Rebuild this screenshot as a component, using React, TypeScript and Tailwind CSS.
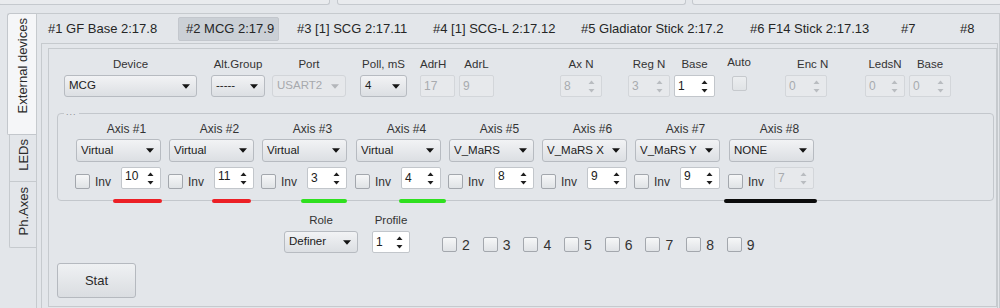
import React from "react";

const FONT = "font-['Liberation_Sans',Arial,sans-serif]";

function DropArrow({ disabled }: { disabled?: boolean }) {
  return (
    <svg width="8" height="5" viewBox="0 0 8 5" className="shrink-0">
      <path d="M0 0.3H8L4 4.8Z" fill={disabled ? "#b3b6ba" : "#141414"} />
    </svg>
  );
}

function SpinArrows({ disabled }: { disabled?: boolean }) {
  const c = disabled ? "#b9bcc0" : "#1e1e1e";
  return (
    <svg width="7" height="13" viewBox="0 0 7 13" className="shrink-0">
      <path d="M3.5 0.5L6.5 4H0.5Z" fill={c} />
      <path d="M0.5 9H6.5L3.5 12.5Z" fill={c} />
    </svg>
  );
}

function Combo({
  text,
  className = "",
  disabled,
}: {
  text: string;
  className?: string;
  disabled?: boolean;
}) {
  return (
    <div
      className={`flex shrink-0 items-center justify-between rounded-[3px] border pl-[4px] pr-[6px] text-[11.5px] ${
        disabled
          ? "border-[#d2d5d9] bg-[#e6e8eb] text-[#a6a9ad]"
          : "border-[#b7bbc1] bg-linear-to-b from-[#f2f3f5] to-[#dcdfe3] text-[#202020]"
      } ${className}`}
    >
      <span className="whitespace-nowrap leading-none">{text}</span>
      <DropArrow disabled={disabled} />
    </div>
  );
}

function Spin({
  value,
  className = "",
  disabled,
  high,
  noArrows,
}: {
  value: string;
  className?: string;
  disabled?: boolean;
  high?: boolean;
  noArrows?: boolean;
}) {
  return (
    <div
      className={`flex shrink-0 justify-between rounded-[2px] border pl-[3px] pr-[6px] text-[12px] ${
        high ? "items-start" : "items-center"
      } ${
        disabled
          ? "border-[#d3d6da] bg-[#e7e9ec] text-[#a8abaf]"
          : "border-[#c2c6cb] bg-white text-[#202020]"
      } ${className}`}
    >
      <span className={`leading-[14px] ${high ? "pt-[1px]" : ""}`}>{value}</span>
      {!noArrows && (
        <span className="flex h-full items-center">
          <SpinArrows disabled={disabled} />
        </span>
      )}
    </div>
  );
}

function Check({ disabled }: { disabled?: boolean }) {
  return (
    <div
      className={`h-[15px] w-[15px] shrink-0 rounded-[2px] border ${
        disabled
          ? "border-[#c6c9cd] bg-linear-to-b from-[#eceef0] to-[#e0e3e6]"
          : "border-[#a3a7ad] bg-linear-to-b from-[#f6f7f8] to-[#e0e3e6]"
      }`}
    />
  );
}

function VText({ children }: { children: React.ReactNode }) {
  return (
    <div className="rotate-180 whitespace-nowrap text-[13px] leading-[15px] text-[#2a2a2a] [writing-mode:vertical-rl]">
      {children}
    </div>
  );
}

const tabs = [
  { t: "#1 GF Base 2:17.8", w: "w-[138px] pl-[8px]" },
  { t: "#2 MCG 2:17.9", w: "w-[101px] mr-[10px] pl-[7px] rounded-[2px] border border-[#c3c7cd] bg-[#cbd0d6]" },
  { t: "#3 [1] SCG 2:17.11", w: "w-[136px] pl-[8px]" },
  { t: "#4 [1] SCG-L 2:17.12", w: "w-[148px] pl-[8px]" },
  { t: "#5 Gladiator Stick 2:17.2", w: "w-[169px] pl-[8px]" },
  { t: "#6 F14 Stick 2:17.13", w: "w-[151px] pl-[8px]" },
  { t: "#7", w: "w-[59px] pl-[8px]" },
  { t: "#8", w: "w-[40px] pl-[8px]" },
];

type Axis = {
  name: string;
  sel: string;
  val: string;
  ml: string;
  high?: boolean;
  disabled?: boolean;
  bar?: string;
};

const axes: Axis[] = [
  { name: "Axis #1", sel: "Virtual", val: "10", ml: "ml-0", high: true, bar: "left-[37px] w-[49px] bg-[#ec2026]" },
  { name: "Axis #2", sel: "Virtual", val: "11", ml: "ml-[8px]", high: true, bar: "left-[43px] w-[39px] bg-[#ec2026]" },
  { name: "Axis #3", sel: "Virtual", val: "3", ml: "ml-[8px]", bar: "left-[39px] w-[46px] bg-[#2fe01f]" },
  { name: "Axis #4", sel: "Virtual", val: "4", ml: "ml-[9px]", bar: "left-[43px] w-[47px] bg-[#2fe01f]" },
  { name: "Axis #5", sel: "V_MaRS", val: "8", ml: "ml-[8px]", high: true },
  { name: "Axis #6", sel: "V_MaRS X", val: "9", ml: "ml-[8px]", high: true },
  { name: "Axis #7", sel: "V_MaRS Y", val: "9", ml: "ml-[8px]", high: true },
  { name: "Axis #8", sel: "NONE", val: "7", ml: "ml-[9px]", disabled: true, bar: "-left-[5px] w-[93px] bg-[#0c0c0c]" },
];

function Label({ children, className = "" }: { children: React.ReactNode; className?: string }) {
  return (
    <div className={`h-[14px] whitespace-nowrap text-center text-[11.5px] leading-[14px] text-[#333] ${className}`}>
      {children}
    </div>
  );
}

export default function App() {
  return (
    <div className={`h-[308px] w-[1000px] overflow-hidden bg-[#e3e6ea] text-[#2d2d2d] ${FONT}`}>
      {/* top strip: bottoms of widgets above */}
      <div className="flex h-[13px] items-start">
        <div className="-ml-[2px] h-[5px] w-[332px] shrink-0 rounded-b-[3px] border-x border-b border-[#c5c9ce] bg-[#e9ebee]" />
        <div className="ml-[7px] h-[5px] w-[349px] shrink-0 rounded-b-[3px] border-x border-b border-[#c5c9ce] bg-[#e9ebee]" />
        <div className="-mr-[2px] ml-[6px] h-[5px] flex-1 rounded-b-[3px] border-x border-b border-[#c5c9ce] bg-[#e9ebee]" />
      </div>

      <div className="flex h-[295px]">
        {/* west tabs */}
        <div className="ml-[7px] flex w-[29px] shrink-0 flex-col">
          <div className="flex h-[122px] w-[29px] flex-col items-center rounded-tl-[3px] rounded-bl-[2px] border-y border-l border-[#c3c7cc] bg-[#f5f6f8] pt-[4px]">
            <VText>External devices</VText>
          </div>
          <div className="ml-[2px] flex h-[47px] w-[27px] flex-col items-center border-b border-l border-[#c6cace] pt-[4px]">
            <VText>LEDs</VText>
          </div>
          <div className="ml-[2px] flex h-[66px] w-[27px] flex-col items-center rounded-bl-[2px] border-b border-l border-[#c6cace] pt-[5px]">
            <VText>Ph.Axes</VText>
          </div>
        </div>

        {/* pane */}
        <div className="h-[295px] flex-1 border-x border-t border-[#c6cace] pl-[4px] pr-[1px]">
          {/* device tab bar */}
          <div className="-ml-[1px] flex h-[29px] items-center">
            {tabs.map((t) => (
              <div
                key={t.t}
                className={`flex h-[24px] shrink-0 items-center whitespace-nowrap text-[13px] text-[#262626] ${t.w}`}
              >
                {t.t}
              </div>
            ))}
          </div>

          {/* inner tab pane */}
          <div className="h-[270px] border-x border-t border-[#c6cace] pl-[6px] pt-[4px]">
            {/* frame */}
            <div className="h-[259px] w-[949px] border border-[#c6cace] pt-[8px]">
              {/* row 1 */}
              <div className="flex items-end">
                <div className="ml-[15px] flex w-[133px] flex-col">
                  <Label>Device</Label>
                  <Combo text="MCG" className="mt-[4px] h-[22px] w-[133px]" />
                </div>
                <div className="ml-[14px] flex w-[54px] flex-col">
                  <Label>Alt.Group</Label>
                  <Combo text="-----" className="mt-[4px] h-[22px] w-[54px]" />
                </div>
                <div className="ml-[7px] flex w-[74px] flex-col">
                  <Label>Port</Label>
                  <Combo text="USART2" disabled className="mt-[4px] h-[22px] w-[74px]" />
                </div>
                <div className="ml-[14px] flex w-[47px] flex-col">
                  <Label>Poll, mS</Label>
                  <Combo text="4" className="mt-[4px] h-[22px] w-[47px]" />
                </div>
                <div className="ml-[13px] flex w-[35px] flex-col">
                  <Label className="pr-[9px]">AdrH</Label>
                  <Spin value="17" disabled noArrows className="mt-[4px] h-[22px] w-[35px]" />
                </div>
                <div className="ml-[4px] flex w-[35px] flex-col">
                  <Label>AdrL</Label>
                  <Spin value="9" disabled noArrows className="mt-[4px] h-[22px] w-[35px]" />
                </div>
                <div className="ml-[66px] flex w-[42px] flex-col">
                  <Label>Ax N</Label>
                  <Spin value="8" disabled className="mt-[4px] h-[22px] w-[42px]" />
                </div>
                <div className="ml-[26px] flex w-[42px] flex-col">
                  <Label>Reg N</Label>
                  <Spin value="3" disabled className="mt-[4px] h-[22px] w-[42px]" />
                </div>
                <div className="ml-[4px] flex w-[41px] flex-col">
                  <Label>Base</Label>
                  <Spin value="1" className="mt-[4px] h-[22px] w-[41px]" />
                </div>
                <div className="ml-[11px] flex w-[26px] flex-col items-center">
                  <Label className="-mt-[2px]">Auto</Label>
                  <div className="mt-[6px] flex h-[22px] items-start pt-[1px]">
                    <Check disabled />
                  </div>
                </div>
                <div className="ml-[33px] flex w-[42px] flex-col">
                  <Label className="pl-[12px]">Enc N</Label>
                  <Spin value="0" disabled className="mt-[4px] h-[22px] w-[42px]" />
                </div>
                <div className="ml-[38px] flex w-[40px] flex-col">
                  <Label>LedsN</Label>
                  <Spin value="0" disabled className="mt-[4px] h-[22px] w-[40px]" />
                </div>
                <div className="ml-[4px] flex w-[42px] flex-col">
                  <Label>Base</Label>
                  <Spin value="0" disabled className="mt-[4px] h-[22px] w-[42px]" />
                </div>
              </div>

              {/* axes group box */}
              <div className="relative ml-[8px] mt-[16px] h-[88px] w-[937px] rounded-[4px] border border-[#c3c7cc]">
                <div className="absolute -top-[6px] left-[6px] bg-[#e3e6ea] px-[2px] text-[9px] leading-[8px] tracking-[1px] text-[#8a8d91]">
                  ...
                </div>
                <div className="flex pl-[18px] pt-[8px]">
                  {axes.map((a) => (
                    <div key={a.name} className={`relative flex w-[85px] shrink-0 flex-col ${a.ml}`}>
                      <Label className="pl-[16px] text-[12px]">{a.name}</Label>
                      <Combo text={a.sel} className="mt-[3px] h-[23px] w-[85px]" />
                      <div className="mt-[5px] flex h-[22px] items-start">
                        <div className="-ml-[1px] mt-[7px]">
                          <Check />
                        </div>
                        <span className="ml-[5px] mt-[9px] text-[12px] leading-none text-[#333]">Inv</span>
                        <Spin
                          value={a.val}
                          disabled={a.disabled}
                          high={a.high}
                          className="ml-auto h-[22px] w-[40px]"
                        />
                      </div>
                      {a.bar && (
                        <div className={`absolute top-[77px] h-[4px] rounded-full ${a.bar}`} />
                      )}
                    </div>
                  ))}
                </div>
              </div>

              {/* role / profile row */}
              <div className="mt-[12px] flex items-end">
                <div className="ml-[235px] flex w-[74px] flex-col">
                  <Label>Role</Label>
                  <Combo text="Definer" className="mt-[4px] h-[22px] w-[74px]" />
                </div>
                <div className="ml-[14px] flex w-[38px] flex-col">
                  <Label>Profile</Label>
                  <Spin value="1" className="mt-[4px] h-[22px] w-[38px]" />
                </div>
                <div className="mb-[1px] ml-[32px] flex items-center">
                  {["2", "3", "4", "5", "6", "7", "8", "9"].map((n) => (
                    <div key={n} className="flex w-[40.7px] shrink-0 items-center">
                      <Check />
                      <span className="ml-[5px] text-[14px] leading-none text-[#333]">{n}</span>
                    </div>
                  ))}
                </div>
              </div>

              {/* Stat button */}
              <div className="ml-[8px] mt-[10px] flex h-[35px] w-[79px] items-center justify-center rounded-[3px] border border-[#b5b9bf] bg-linear-to-b from-[#eff1f3] to-[#dadde1] text-[13px] text-[#2a2a2a]">
                Stat
              </div>
            </div>
          </div>
        </div>
      </div>
    </div>
  );
}
